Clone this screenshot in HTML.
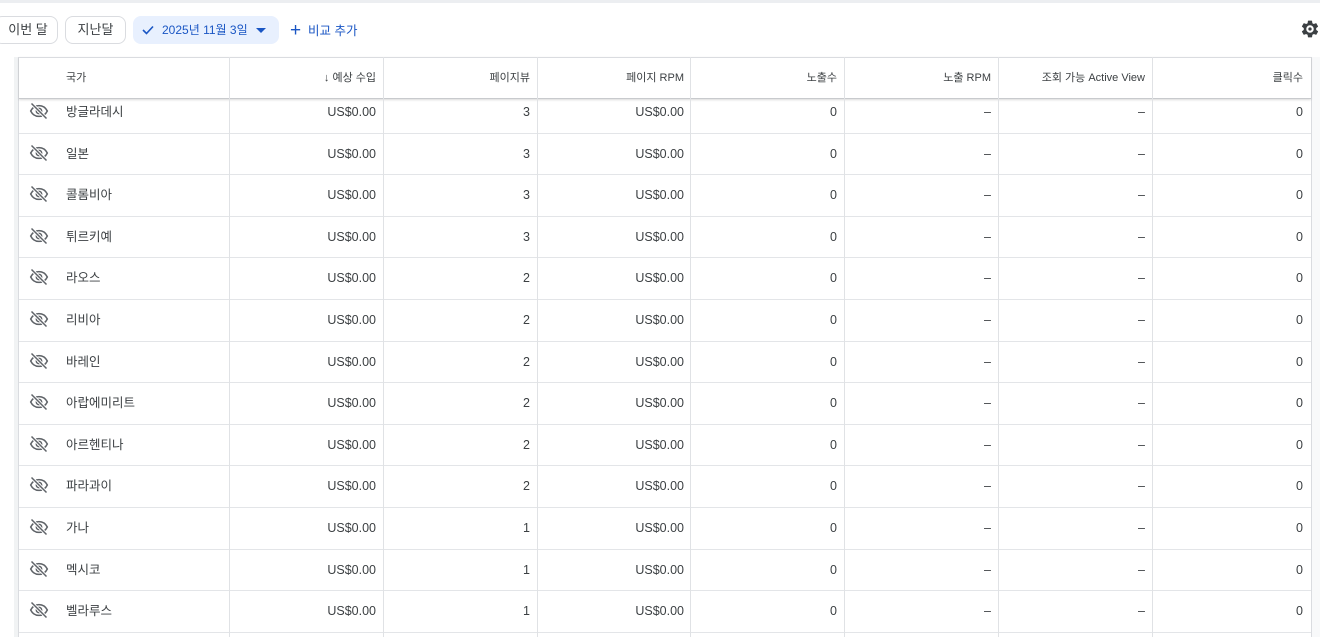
<!DOCTYPE html>
<html><head><meta charset="utf-8"><style>
*{box-sizing:border-box;margin:0;padding:0}
body{width:1320px;height:637px;overflow:hidden;background:#fff;font-family:"Liberation Sans","Noto Sans CJK KR",sans-serif;color:#3c4043;position:relative}
.topline{position:absolute;left:0;top:0;width:1320px;height:3px;background:#eceef1}
.btn{position:absolute;top:16px;height:28px;border:1px solid #dadce0;border-radius:8px;font-size:13px;line-height:26px;color:#3c4043;white-space:nowrap;text-align:center}
.chip{position:absolute;top:16px;left:133px;width:146px;height:28px;background:#e8f0fe;border-radius:8px;color:#1a56c4;font-size:12px;line-height:28px;white-space:nowrap}
.add{position:absolute;top:16px;left:290px;color:#1a56c4;font-size:12.5px;line-height:28px;white-space:nowrap}
.lstrip{position:absolute;left:14px;top:57px;width:5px;height:580px;background:#f1f3f4;border-right:1px solid #dadce0}
.rstrip{position:absolute;left:1311px;top:57px;width:9px;height:580px;background:#f8f9fa;border-left:1px solid #dadce0}
.hdr{position:absolute;left:19px;top:57px;width:1292px;height:42px;border-top:1px solid #dadce0;border-bottom:1px solid #c8cacd;box-shadow:0 1px 2px rgba(0,0,0,.15);background:#fff;z-index:2}
.vl{position:absolute;top:57px;width:1px;height:580px;background:#e0e2e5;z-index:3}
.hl{position:absolute;left:19px;width:1292px;height:1px;background:#e3e5e8}
.c{position:absolute;font-size:12.5px;white-space:nowrap;height:16px;line-height:16px}
.h{position:absolute;font-size:11px;white-space:nowrap;color:#3c4043;top:71px;height:14px;line-height:14px;z-index:4}
.r{text-align:right}
</style></head><body>
<div class="topline"></div>
<div class="btn" style="left:-6px;width:64px;padding-left:4px">이번 달</div>
<div class="btn" style="left:65px;width:61px">지난달</div>
<div class="chip"><svg style="position:absolute;left:9px;top:9px" width="12" height="10" viewBox="0 0 12 10"><path d="M1 5 L4.5 8.5 L11 1.5" fill="none" stroke="#1a56c4" stroke-width="1.6"/></svg><span style="position:absolute;left:29px">2025년 11월 3일</span><svg style="position:absolute;left:123px;top:12px" width="10" height="5"><path d="M0 0 L10 0 L5 5Z" fill="#1a56c4"/></svg></div>
<div class="add"><span style="font-size:19px;position:relative;top:1px">+</span>&nbsp; 비교 추가</div>
<svg style="position:absolute;left:1300px;top:19px" width="20" height="20" viewBox="0 0 24 24"><path fill="#3c4043" d="M19.4 13c.04-.33.06-.66.06-1s-.02-.67-.06-1l2.1-1.650c.19-.15.24-.42.12-.64l-2-3.460c-.12-.22-.39-.3-.61-.22l-2.490 1c-.52-.4-1.080-.73-1.690-.98l-.38-2.650A.49.49 0 0 0 14 2h-4c-.25 0-.46.18-.49.42l-.38 2.650c-.61.25-1.170.59-1.690.98l-2.490-1a.5.5 0 0 0-.61.22l-2 3.460c-.13.22-.07.49.12.64L4.570 11c-.04.33-.07.67-.07 1s.03.67.07 1l-2.110 1.650c-.19.15-.24.42-.12.64l2 3.460c.12.22.39.3.61.22l2.490-1c.52.4 1.080.73 1.690.98l.38 2.650c.03.24.24.42.49.42h4c.25 0 .46-.18.49-.42l.38-2.650c.61-.25 1.170-.59 1.690-.98l2.490 1c.23.09.49 0 .61-.22l2-3.460c.12-.22.07-.49-.12-.64L19.4 13zM12 16.5a4.5 4.5 0 1 1 0-9 4.5 4.5 0 0 1 0 9zm0-2.500a2 2 0 1 0 0-4 2 2 0 0 0 0 4z"/></svg>
<div class="lstrip"></div><div class="rstrip"></div>
<div class="hdr"></div>
<div class="vl" style="left:229px"></div><div class="vl" style="left:383px"></div><div class="vl" style="left:537px"></div><div class="vl" style="left:690px"></div><div class="vl" style="left:844px"></div><div class="vl" style="left:998px"></div><div class="vl" style="left:1152px"></div>
<div class="h" style="left:66px">국가</div>
<div class="h r" style="right:944px">↓ 예상 수입</div>
<div class="h r" style="right:790px">페이지뷰</div>
<div class="h r" style="right:636px">페이지 RPM</div>
<div class="h r" style="right:483px">노출수</div>
<div class="h r" style="right:329px">노출 RPM</div>
<div class="h r" style="right:175px">조회 가능 Active View</div>
<div class="h r" style="right:17px">클릭수</div>
<div id="rows"></div>
<script>
var d=[["방글라데시",3],["일본",3],["콜롬비아",3],["튀르키예",3],["라오스",2],["리비아",2],["바레인",2],["아랍에미리트",2],["아르헨티나",2],["파라과이",2],["가나",1],["멕시코",1],["벨라루스",1]];
var h="";
for(var i=0;i<d.length;i++){var y=111+i*41.6-7;var b=132.5+i*41.6;
h+='<div class="hl" style="top:'+b+'px"></div>';
h+='<svg style="position:absolute;left:28px;top:'+(y-3)+'px" width="22" height="20" viewBox="0 0 24 24"><path d="M2 12c2-4 5.5-6.5 10-6.5S20 8 22 12c-2 4-5.5 6.5-10 6.5S4 16 2 12z" fill="none" stroke="#5f6368" stroke-width="1.8"/><circle cx="12" cy="12" r="3.2" fill="none" stroke="#5f6368" stroke-width="1.8"/><path d="M3 3l18 18" stroke="#fff" stroke-width="4"/><path d="M3 3l18 18" stroke="#5f6368" stroke-width="1.8"/></svg>';
h+='<div class="c" style="left:66px;top:'+(y)+'px">'+d[i][0]+'</div>';
h+='<div class="c r" style="right:944px;top:'+y+'px">US$0.00</div>';
h+='<div class="c r" style="right:790px;top:'+y+'px">'+d[i][1]+'</div>';
h+='<div class="c r" style="right:636px;top:'+y+'px">US$0.00</div>';
h+='<div class="c r" style="right:483px;top:'+y+'px">0</div>';
h+='<div class="c r" style="right:329px;top:'+y+'px">–</div>';
h+='<div class="c r" style="right:175px;top:'+y+'px">–</div>';
h+='<div class="c r" style="right:17px;top:'+y+'px">0</div>';}
document.getElementById("rows").innerHTML=h;
</script>
</body></html>
